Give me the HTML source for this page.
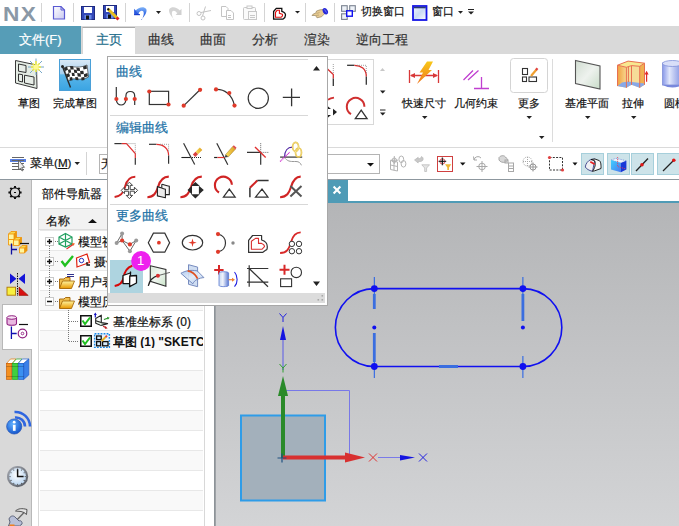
<!DOCTYPE html>
<html><head><meta charset="utf-8">
<style>
*{box-sizing:border-box}
html,body{margin:0;padding:0}
body{width:679px;height:526px;overflow:hidden;position:relative;background:#fff;font-family:"Liberation Sans",sans-serif;color:#111}
.a{position:absolute}
.t{position:absolute;white-space:nowrap;line-height:1;-webkit-text-stroke:0.2px currentColor}
svg{position:absolute;overflow:visible}
.sep{position:absolute;width:1px;background:#d4d4d4}
.dd{position:absolute;width:0;height:0;border-left:3px solid transparent;border-right:3px solid transparent;border-top:3px solid #222}
</style></head><body>

<!-- ===== Title / QAT bar ===== -->
<div class="a" style="left:0;top:0;width:679px;height:26px;background:#fff"></div>
<div class="t" style="left:3px;top:3px;font-size:21px;font-weight:bold;color:#8a98a6;letter-spacing:1.2px;transform:scaleX(1.08);transform-origin:0 0;-webkit-text-stroke:0">NX</div>
<div class="sep" style="left:41px;top:3px;height:19px"></div>
<div class="sep" style="left:73px;top:3px;height:19px"></div>
<div class="sep" style="left:125px;top:3px;height:19px"></div>
<div class="sep" style="left:189px;top:3px;height:19px"></div>
<div class="sep" style="left:264px;top:3px;height:19px"></div>
<div class="sep" style="left:305px;top:3px;height:19px"></div>
<div class="sep" style="left:334px;top:3px;height:19px"></div>


<svg class="a" style="left:0;top:0" width="679" height="26" viewBox="0 0 679 26">
 <defs>
  <linearGradient id="gDoc" x1="0" y1="0" x2="1" y2="1"><stop offset="0" stop-color="#fff"/><stop offset="1" stop-color="#c8c8f0"/></linearGradient>
  <linearGradient id="gWin" x1="0" y1="0" x2="1" y2="1"><stop offset="0" stop-color="#f4f8ff"/><stop offset="0.5" stop-color="#c9daf4"/><stop offset="1" stop-color="#ffffff"/></linearGradient>
  <linearGradient id="gUndo" x1="0" y1="0" x2="0" y2="1"><stop offset="0" stop-color="#80b4f8"/><stop offset="0.5" stop-color="#3a70e8"/><stop offset="1" stop-color="#1a48c8"/></linearGradient>
 </defs>
 <!-- new doc -->
 <path d="M53.5 6.5 H61 L64.5 10 V19 H53.5 Z" fill="url(#gDoc)" stroke="#5a5ad2" stroke-width="1.2"/>
 <path d="M61 6.5 V10 H64.5" fill="none" stroke="#5a5ad2" stroke-width="1"/>
 <!-- save -->
 <rect x="81.5" y="6.5" width="13" height="13" fill="#3348b8" stroke="#1e2a80" stroke-width="1"/>
 <rect x="84" y="7" width="8" height="6" fill="#fff"/>
 <rect x="84.5" y="15" width="7" height="4.5" fill="#6a8ae8"/>
 <rect x="86" y="15.5" width="3" height="4" fill="#111"/>
 <!-- save as -->
 <rect x="103.5" y="5.5" width="13" height="13" fill="#3348b8" stroke="#1e2a80" stroke-width="1"/>
 <rect x="106" y="6" width="8" height="6" fill="#fff"/>
 <rect x="106.5" y="14" width="7" height="4.5" fill="#6a8ae8"/>
 <rect x="108" y="14.5" width="3" height="4" fill="#111"/>
 <path d="M108 9 L117 18" stroke="#e8c020" stroke-width="3" stroke-linecap="butt"/>
 <path d="M116.5 17.5 L118.5 19.5" stroke="#e02020" stroke-width="3"/>
 <path d="M107.5 8.5 L109 10" stroke="#111" stroke-width="2"/>
 <!-- undo -->
 <path d="M135.5 10.8 C138.5 7 144 5.8 146.2 9 C147.5 11.5 145 16 141.2 19.8 L141.8 19.9 C143.8 16 144.3 12.8 143.2 11.3 C142 10 139.5 10.8 138.5 13.5 Z" fill="url(#gUndo)"/>
 <path d="M134.1 8.8 V15 H140 Z" fill="#2a5ae0"/>
 <path d="M134.1 14.2 H140 V15.2 H134.1 Z" fill="#1a3ac8"/>
 <path d="M156 11 H161 L158.5 14 Z" fill="#222"/>
 <!-- redo gray -->
 <path d="M180.1 10.8 C177.1 7 171.6 5.8 169.4 9 C168.1 11.5 170.6 16 174.4 19.8 L173.8 19.9 C171.8 16 171.3 12.8 172.4 11.3 C173.6 10 176.1 10.8 177.1 13.5 Z" fill="#d4d4d4"/>
 <path d="M181.5 8.8 V15 H175.6 Z" fill="#d0d0d0"/>
 <!-- scissors gray -->
 <g stroke="#c4c4c4" fill="none" stroke-width="1">
  <circle cx="199" cy="13.5" r="2"/><circle cx="203" cy="18" r="2"/>
  <path d="M201 12.5 L211 10.5 M202.5 16 L205.5 6.5"/>
 </g>
 <!-- copy gray -->
 <g stroke="#c4c4c4" fill="#fff" stroke-width="1">
  <path d="M221.5 6.5 H226 L228 8.5 V16.5 H221.5 Z"/>
  <path d="M226.5 10.5 H231 L233.5 13 V19.5 H226.5 Z"/>
  <path d="M228 15.5 H231 M228 17.5 H231"/>
 </g>
 <!-- paste gray -->
 <g stroke="#c8c8c8" fill="#fafafa" stroke-width="1">
  <rect x="243.5" y="7.5" width="12" height="12" rx="1"/>
  <rect x="247" y="6" width="5" height="2.5"/>
  <rect x="248.5" y="11.5" width="8" height="8"/>
  <path d="M250 15.5 H255 M250 17.5 H255"/>
 </g>
 <!-- heart/sketch style -->
 <path d="M273.6 11.5 L276.3 8.4 H281.8 V11.3 C284 12 285.5 13 285.5 15 C285.5 17 284 18.6 282.9 19.2 H273.6 Z" fill="#fff" stroke="#111" stroke-width="1.3" stroke-linejoin="miter"/>
 <path d="M275.5 12.4 L277.1 10.3 H279.4 V13.4 L282.2 14.2 C283 15 282.5 16.5 281 17.3 H275.5 Z" fill="none" stroke="#e01010" stroke-width="1.1"/>
 <path d="M295 11 H300 L297.5 13.5 Z" fill="#222"/>
 <!-- brush -->
 <path d="M312 15.5 C312.5 14 315 13.5 316 12.8 L316.5 11 L320 9.8 L323.5 9.5 L324.5 13.8 L321.5 16.8 L317 17.8 L315.5 15.5 Z" fill="#e8cc94" stroke="#8a7650" stroke-width="0.6"/>
 <path d="M316.5 13.5 L319.5 12.5 M316 15.5 L319 15" stroke="#a89060" stroke-width="0.6"/>
 <ellipse cx="325.3" cy="11.2" rx="2.4" ry="3.4" transform="rotate(-30 325.3 11.2)" fill="#2828d8"/>
 <path d="M324.5 9.5 L326.5 12.5" stroke="#8090ff" stroke-width="0.8"/>
 <!-- switch window -->
 <g fill="#eef2f8" stroke="#7a8290" stroke-width="1.1">
  <rect x="341.6" y="5.7" width="5.6" height="5.6"/><rect x="349.7" y="5.7" width="5.6" height="5.6"/>
  <rect x="341.6" y="13.8" width="5.6" height="5.6"/>
 </g>
 <rect x="346.7" y="10.8" width="5.6" height="5.4" fill="#fff" stroke="#1010f0" stroke-width="1.4"/>
 <!-- window -->
 <rect x="413" y="6" width="13.5" height="14" fill="url(#gWin)" stroke="#1414e6" stroke-width="1.8"/>
 <rect x="413.8" y="6.8" width="12" height="1.5" fill="#2a3a70"/>
 <path d="M458 11 H463 L460.5 13.8 Z" fill="#222"/>
 <path d="M468 9.5 H474" stroke="#222" stroke-width="1"/>
 <path d="M468 11.5 H474 L471 14.5 Z" fill="#222"/>
</svg>
<div class="t" style="left:361px;top:6px;font-size:11px">切换窗口</div>
<div class="t" style="left:432px;top:6px;font-size:11px">窗口</div>

<!-- ===== Menu tabs ===== -->
<div class="a" style="left:0;top:26px;width:679px;height:28px;background:#d9d9d9"></div>
<div class="a" style="left:0;top:26px;width:81px;height:28px;background:#569db7"></div>
<div class="t" style="left:19px;top:33px;font-size:13px;color:#fff">文件(F)</div>
<div class="a" style="left:82px;top:27px;width:53px;height:27px;background:#fff;border-top:1px solid #a8a8a8;border-left:1px solid #d4d4d4"></div>
<div class="t" style="left:96px;top:33px;font-size:13px;color:#1f6e8c">主页</div>
<div class="t" style="left:148px;top:33px;font-size:13px;color:#333">曲线</div>
<div class="t" style="left:200px;top:33px;font-size:13px;color:#333">曲面</div>
<div class="t" style="left:252px;top:33px;font-size:13px;color:#333">分析</div>
<div class="t" style="left:304px;top:33px;font-size:13px;color:#333">渲染</div>
<div class="t" style="left:356px;top:33px;font-size:13px;color:#333">逆向工程</div>

<!-- ===== Ribbon ===== -->
<div class="a" style="left:0;top:54px;width:679px;height:94px;background:#fff;border-bottom:1px solid #dadada"></div>
<div class="t" style="left:18px;top:98px;font-size:11px">草图</div>
<div class="t" style="left:53px;top:98px;font-size:11px">完成草图</div>
<div class="t" style="left:402px;top:98px;font-size:11px">快速尺寸</div>
<div class="t" style="left:454px;top:98px;font-size:11px">几何约束</div>
<div class="t" style="left:518px;top:98px;font-size:11px">更多</div>
<div class="t" style="left:565px;top:98px;font-size:11px">基准平面</div>
<div class="t" style="left:622px;top:98px;font-size:11px">拉伸</div>
<div class="t" style="left:664px;top:98px;font-size:11px">圆柱</div>
<div class="sep" style="left:552px;top:59px;height:83px;background:#dcdcdc"></div>


<svg class="a" style="left:0;top:0" width="679" height="148" viewBox="0 0 679 148">
 <defs>
  <linearGradient id="gFin" x1="0" y1="0" x2="0" y2="1"><stop offset="0" stop-color="#dbe9f5"/><stop offset="0.45" stop-color="#a9d0ef"/><stop offset="0.5" stop-color="#5ab6ea"/><stop offset="1" stop-color="#3aa4e2"/></linearGradient>
  <linearGradient id="gPlane" x1="0" y1="0" x2="1" y2="1"><stop offset="0" stop-color="#d0dcd0"/><stop offset="0.5" stop-color="#eef2ee"/><stop offset="1" stop-color="#c8dcc8"/></linearGradient>
  <linearGradient id="gExt" x1="0" y1="0" x2="1" y2="0"><stop offset="0" stop-color="#f0a040"/><stop offset="1" stop-color="#f8d890"/></linearGradient>
  <linearGradient id="gCyl" x1="0" y1="0" x2="1" y2="0"><stop offset="0" stop-color="#8898e8"/><stop offset="0.35" stop-color="#e0e6fb"/><stop offset="1" stop-color="#7a8ce0"/></linearGradient>
  <linearGradient id="gBolt" x1="0" y1="0" x2="0" y2="1"><stop offset="0" stop-color="#f8c818"/><stop offset="1" stop-color="#f07820"/></linearGradient>
 </defs>
 <!-- sketch icon -->
 <path d="M15.5 60.5 L36.5 65 L37 88.5 L15.5 83 Z" fill="#e4ece4" stroke="#3a3a3a" stroke-width="1"/>
 <g fill="#e8eee8" stroke="#333" stroke-width="1">
  <path d="M18.5 64 L26 65.5 V72.5 L18.5 71.2 Z"/>
  <path d="M18.5 74 L22.5 74.7 V82 L18.5 81 Z"/>
  <path d="M24.5 75.2 L34 77 V85 L24.5 83 Z"/>
 </g>
 <g stroke="#78a8c8" stroke-width="1"><path d="M36 58.5 V75 M28 67 H44 M30 61 L42 73 M42 61 L30 73"/></g>
 <g stroke="#f0ec40" stroke-width="1.6"><path d="M36 61 V72 M31 67 H41 M32.5 63.5 L39.5 70.5 M39.5 63.5 L32.5 70.5"/></g>
 <circle cx="36" cy="67" r="2.6" fill="#fffa90"/>
 <!-- finish sketch -->
 <rect x="59.5" y="59.5" width="31" height="31" fill="url(#gFin)" stroke="#4aa0d8" stroke-width="1"/>
 <path d="M62.5 66.5 L70.5 87.5" stroke="#2a2a2a" stroke-width="1.4"/>
 <circle cx="62.5" cy="66.5" r="1.5" fill="#222"/>
 <path d="M64 68 C70 64 76 70 87 65 L88.5 77 C80 82 73 76 68.5 81 Z" fill="#fff" stroke="#222" stroke-width="0.6"/>
 <g fill="#2a2a2a">
  <path d="M64 68 l3 -1.5 l1 3.2 l-3 1.4 z"/><path d="M70 66 l3.2 .3 l.6 3.3 l-3.2 -.2 z"/><path d="M76.3 67.5 l3.3 .4 l.5 3.2 l-3.2 -.3 z"/><path d="M83 66.5 l3.5 -1 l.4 3.2 l-3.4 .9 z"/>
  <path d="M65 71 l3 -1.3 l1 3.1 l-3 1.4 z" fill="none"/>
  <path d="M68 69.7 l2.6 -.4 l.5 3.2 l-2.6 .6 z"/><path d="M73.8 69.6 l2.9 .4 l.5 3.1 l-3 -.3 z"/><path d="M80.1 71.1 l3.3 -.4 l.4 3.2 l-3.3 .4 z"/>
  <path d="M66 74.5 l3 -1.4 l1.1 3.2 l-3 1.3 z"/><path d="M71.6 72.7 l2.7 .3 l.5 3.1 l-2.7 -.1 z"/><path d="M77.2 73.1 l3.3 .5 l.5 3.2 l-3.3 -.4 z"/><path d="M83.8 74.3 l3.6 -1.3 l.5 3.2 l-3.6 1.2 z"/>
  <path d="M69.5 77.5 l2.6 -.4 l.5 3.1 l-2.6 .6 z"/><path d="M75.2 77 l2.8 .3 l.4 3 l-2.8 -.2 z"/><path d="M81.2 77.5 l3 -.5 l.4 3 l-3 .6 z"/>
 </g>
 <!-- quick dimension -->
 <g stroke="#d83838" stroke-width="1.3" fill="none"><path d="M409.5 70 V83 M438.5 70 V83 M411 75.5 H437"/></g>
 <path d="M410 75.5 L415 73 V78 Z M438 75.5 L433 73 V78 Z" fill="#d83838"/>
 <path d="M427 61.5 H433 L428.5 70 H432 L417 84 L423 72.5 H419.5 Z" fill="url(#gBolt)"/>
 <!-- geometric constraints -->
 <g stroke="#c040d0" stroke-width="1.3"><path d="M463.5 80 L473 70.5 M468 80 L478.5 70.5 M481.5 77 V88 M474 88.5 H489"/></g>
 <!-- more box -->
 <rect x="510.5" y="58.5" width="37" height="34" rx="3" fill="#fff" stroke="#d4d4d4" stroke-width="1"/>
 <g stroke="#333" stroke-width="1.1" fill="#fff">
  <rect x="522.5" y="68.5" width="5" height="6"/><rect x="522.5" y="77" width="4" height="4.5"/><rect x="529" y="77" width="7.5" height="4.5"/>
 </g>
 <path d="M531 76 L536.5 69.5" stroke="#f0a030" stroke-width="2.2"/>
 <path d="M536 70 L537.5 68.2" stroke="#e04040" stroke-width="2.2"/>
 <!-- datum plane -->
 <path d="M575.5 60.5 L600 66 V89 L575.5 83.5 Z" fill="url(#gPlane)" stroke="#555" stroke-width="1.1"/>
 <!-- extrude -->
 <path d="M617.5 65.2 L626.4 67.3 V87.8 L617.5 86.1 Z" fill="url(#gExt)"/>
 <path d="M626.4 67.3 L631.5 65.6 L639.7 66.3 V87.8 L631.5 84.8 L626.4 87.8 Z" fill="#f6dc98"/>
 <path d="M639.7 66.3 L644.5 63.2 V84.8 L639.7 87.8 Z" fill="#f0b050"/>
 <path d="M617.5 65.2 L628.1 61.1 L644.5 63.2 L639.7 66.3 L631.5 65.6 L626.4 67.3 Z" fill="#f8e890"/>
 <path d="M617.5 86.1 L622 82.5 L628 81.5 L644.5 83.5 V84.8 L639.7 87.8 L631.5 84.8 L626.4 87.8 Z" fill="#88a8e8"/>
 <g stroke="#e87050" stroke-width="1" fill="none">
  <path d="M617.5 65.2 L628.1 61.1 L644.5 63.2 L639.7 66.3 L631.5 65.6 L626.4 67.3 Z"/>
  <path d="M617.5 65.2 V86.1 M626.4 67.3 V87.8 M628.4 67 V82 M631.5 65.6 V84.8 M639.7 66.3 V87.8 M644.5 63.2 V84.8"/>
 </g>
 <path d="M646.6 73 V81.7" stroke="#e02828" stroke-width="1.2"/><path d="M644.6 74.5 L646.6 70.7 L648.6 74.5 Z" fill="#e02828"/>
 <!-- cylinder -->
 <rect x="662.5" y="63" width="20" height="22" fill="url(#gCyl)" stroke="#8090d8" stroke-width="0.8"/>
 <ellipse cx="672.5" cy="63.5" rx="10" ry="3" fill="#d8def8" stroke="#8090d8" stroke-width="0.8"/>
 <path d="M662.5 85 Q672.5 90 682.5 85" fill="#7888dc"/>
 <!-- ribbon gallery (behind popup) -->
 <rect x="300.5" y="59.5" width="73" height="65" fill="#fff" stroke="#d8d8d8" stroke-width="1"/>
 <g fill="none" stroke-width="1.3">
  <path d="M347.1 65.3 H354.4" stroke="#333"/><path d="M354.4 65.3 C361 65.3 366.3 69 366.3 76.5" stroke="#d83030"/><path d="M366.3 76.5 V84.8" stroke="#333"/>
  <path d="M357 65.3 H366.3 V73" stroke="#888" stroke-width="0.8" stroke-dasharray="1 1"/>
  <path d="M327 68.5 L333.3 74.5 V78.5" stroke="#d83030"/><path d="M333.3 78.5 V86" stroke="#333"/>
  <path d="M333.3 64 V74" stroke="#888" stroke-width="0.8" stroke-dasharray="1 1"/>
  <path d="M351 114.2 A8.8 8.8 0 1 1 364.4 106.7" stroke="#d03030" stroke-width="2"/>
  <path d="M328 99.7 C330 98.5 332 98 334 97.7" stroke="#d03030" stroke-width="1.8"/>
 </g>
 <path d="M355.3 118.7 L361.2 110.1 L367.1 118.7 Z" fill="none" stroke="#333" stroke-width="1.3"/>
 <path d="M333 108.7 L337 112 L333 115.5 Z" fill="#222"/>
 <path d="M327.5 106 L331 109 H327.5 Z M327.5 118 L331 115 H327.5 Z" fill="#222"/>
 <path d="M380 71 L382.5 68 L385 71 Z" fill="#c8c8c8"/>
 <path d="M380 90.5 H385.5 L382.7 93.5 Z" fill="#222"/>
 <path d="M380 110 H385.5" stroke="#222" stroke-width="1"/>
 <path d="M380 112.5 H385.5 L382.7 115.5 Z" fill="#222"/>
 <!-- dropdown arrows -->
 <path d="M422 116 H427.5 L424.7 119 Z M526.5 116 H532 L529.2 119 Z M585 116 H590.5 L587.7 119 Z M631 116 H636.5 L633.7 119 Z M539 136 H544.5 L541.7 139 Z" fill="#222"/>
</svg>

<!-- ===== Secondary toolbar ===== -->
<div class="a" style="left:0;top:148px;width:679px;height:32px;background:#fff;border-bottom:1px solid #8d979e"></div>
<div class="t" style="left:30px;top:157px;font-size:11.6px">菜单(<u>M</u>)</div>
<div class="sep" style="left:86px;top:152px;height:23px"></div>
<div class="a" style="left:99px;top:154px;width:281px;height:20px;border:1px solid #b4b4b4;background:#fff"></div>
<div class="t" style="left:101px;top:158px;font-size:12px">无</div>


<svg class="a" style="left:0;top:148px" width="679" height="32" viewBox="0 148 679 32">
 <defs>
  <linearGradient id="gCube" x1="0" y1="0" x2="1" y2="1"><stop offset="0" stop-color="#40d0ff"/><stop offset="1" stop-color="#4a78f0"/></linearGradient>
 </defs>
 <!-- menu icon -->
 <rect x="10" y="159" width="16" height="3" fill="#5a80e0"/>
 <g stroke="#666" stroke-width="1"><path d="M12 157.5 H24 M12 160.5 H24 M12 163.5 H24 M12 166.5 H24 M12 169.5 H24"/></g>
 <path d="M18.5 160 V170 L20.5 168 L22 171 L23 170.5 L21.8 167.5 L24.5 167.3 Z" fill="#eee" stroke="#555" stroke-width="0.8"/>
 <path d="M74.5 162 H80 L77.2 165 Z" fill="#222"/>
 <path d="M367 163 H374 L370.5 166.5 Z" fill="#111"/>
 <!-- gray icons -->
 <g stroke="#b4b4b4" fill="none" stroke-width="1">
  <path d="M390.5 160.5 L397.5 162 V171 L390.5 169.5 Z M390.5 165 L397.5 166.5 M394 161.2 V170.3"/>
  <path d="M394.3 156 V164 M390.5 160.2 H398"/>
  <circle cx="394.3" cy="160.2" r="2.2"/>
  <ellipse cx="401.3" cy="159.3" rx="2.4" ry="3.3"/><ellipse cx="403.5" cy="163.8" rx="2.4" ry="3.3"/>
 </g>
 <path d="M414.5 160 L418.2 157.3 V158.8 C420 158.8 421.5 157.5 421.5 156.5 C423.8 157.5 424 161 420.5 161.5 L418.2 161.5 V163 Z" fill="#c8c8c8" stroke="#b0b0b0" stroke-width="0.6"/>
 <path d="M421.8 164.8 H429.5 L426.6 168 V171.5 H424.7 V168 Z" fill="#e4e4e4" stroke="#bdbdbd" stroke-width="0.8"/>
 <rect x="437.5" y="156.5" width="15" height="15" fill="#fff" stroke="#d04040" stroke-width="1"/>
 <circle cx="442.4" cy="161.4" r="2.6" fill="none" stroke="#e04048" stroke-width="0.9"/>
 <path d="M442.4 157.6 V165.2 M438.6 161.4 H446.2" stroke="#333" stroke-width="1.3"/>
 <circle cx="442.4" cy="161.4" r="1" fill="#111"/>
 <path d="M445 164.2 H451.3 L449 167.5 V170 H447.3 V167.5 Z" fill="#f0b838"/>
 <path d="M460 162.5 H465.5 L462.7 165.5 Z" fill="#111"/>
 <g stroke="#a8a8a8" fill="none" stroke-width="1">
  <path d="M474 160 A4 4 0 0 1 481 158 M474 160 L473.5 156.5 M474 160 L477 160"/>
  <circle cx="482" cy="166.5" r="3.3"/><path d="M482 161 V172 M476.5 166.5 H487.5"/>
  <path d="M499 157.5 C501 155 505 155 506 158 C508 158 508 162 506 162 C503 163 500 162 499 160 Z" fill="#d8d8d8"/>
  <rect x="505" y="160" width="3" height="3"/><rect x="508.5" y="163" width="5" height="8.5"/><path d="M508.5 166 H513.5 M508.5 168.5 H513.5"/>
 </g>
 <g stroke="#a8a8a8" fill="none" stroke-width="1" stroke-dasharray="1 1">
  <circle cx="527.5" cy="161.5" r="4.5"/><path d="M527.5 157 V166 M523 161.5 H532"/>
 </g>
 <circle cx="533" cy="167" r="3" fill="none" stroke="#999" stroke-width="1"/>
 <path d="M533 162.5 V171.5 M528.5 167 H537.5" stroke="#999" stroke-width="1"/>
 <rect x="549.5" y="157.5" width="13" height="12.5" fill="none" stroke="#333" stroke-width="1" stroke-dasharray="2 1.3"/>
 <circle cx="549.5" cy="157.5" r="1.6" fill="#e04040"/><circle cx="562.5" cy="170" r="1.6" fill="#e04040"/>
 <path d="M572.5 162.5 H577.5 L575 165.5 Z" fill="#111"/>
 <!-- highlighted buttons -->
 <g fill="#cde3e9" stroke="#a6cfdb" stroke-width="1">
  <rect x="581.5" y="153.5" width="22" height="21"/><rect x="607.5" y="153.5" width="22" height="21"/>
  <rect x="631.5" y="153.5" width="22" height="21"/><rect x="657.5" y="153.5" width="30" height="21"/>
 </g>
 <path d="M585.3 167 C585.5 164 588 160.5 591 159.5 L595 159 L592.5 171.3 C589 170.5 586.5 169 585.3 167 Z" fill="#f0f0f4" stroke="#3a4088" stroke-width="0.9"/>
 <path d="M591 159.5 L595 159 L599 160.5 C600.5 161 601.2 163.5 601 168.5 L594.7 170.8 L592.5 171.3 C595 168 596 164 594.7 160.8 Z" fill="#f8f8f8" stroke="#111" stroke-width="0.9"/>
 <path d="M590.3 161.8 L594.7 164.3" stroke="#e82020" stroke-width="1.6"/>
 <path d="M611 160.1 L616 158.3 L626.4 160.8 L620.9 163 Z" fill="#eef4fa" stroke="#4a70d0" stroke-width="0.6" stroke-dasharray="1 0.8"/>
 <path d="M611 160.1 L620.9 163 V172.3 L611 169.5 Z" fill="url(#gCube)"/>
 <path d="M620.9 163 L626.4 160.8 V169.5 L620.9 172.3 Z" fill="#1838d8"/>
 <path d="M617.6 157 V166.5 L626 169" fill="none" stroke="#e04060" stroke-width="0.8" stroke-dasharray="1.2 0.8"/>
 <path d="M636 171 L648 158.5" stroke="#222" stroke-width="1.3"/><circle cx="642" cy="164.8" r="1.8" fill="#e01818"/>
 <path d="M663 171 L673.5 160.5" stroke="#222" stroke-width="1.3"/><circle cx="673.8" cy="160.3" r="1.8" fill="#e01818"/>
</svg>

<!-- ===== Left resource bar ===== -->
<div class="a" style="left:0;top:180px;width:32px;height:346px;background:#d9d9d9;border-right:1px solid #b8b8b8"></div>
<div class="a" style="left:2px;top:304px;width:30px;height:46px;background:#fff;border:1px solid #b8b8b8;border-right:none"></div>

<!-- ===== Navigator pane ===== -->
<div class="a" style="left:32px;top:180px;width:182px;height:346px;background:#fff"></div>
<div class="t" style="left:42px;top:188px;font-size:12px">部件导航器</div>
<div class="a" style="left:38px;top:208px;width:167px;height:318px;border:1px solid #d8d8d8;border-bottom:none;background:#fff"></div>
<div class="a" style="left:39px;top:209px;width:165px;height:21px;background:#f2f2f2;border-bottom:1px solid #dedede"></div>
<div class="t" style="left:46px;top:215px;font-size:12px">名称</div>
<div class="a" style="left:40px;top:230px;width:163px;height:20px;background:#fff;border-top:1px solid #e8e8e8"></div>
<div class="a" style="left:40px;top:250px;width:163px;height:20px;background:#f9f9f9;border-top:1px solid #e8e8e8"></div>
<div class="a" style="left:40px;top:270px;width:163px;height:20px;background:#fff;border-top:1px solid #e8e8e8"></div>
<div class="a" style="left:40px;top:290px;width:163px;height:20px;background:#f9f9f9;border-top:1px solid #e8e8e8"></div>
<div class="a" style="left:40px;top:310px;width:163px;height:20px;background:#fff;border-top:1px solid #e8e8e8"></div>
<div class="a" style="left:40px;top:330px;width:163px;height:20px;background:#f9f9f9;border-top:1px solid #e8e8e8"></div>
<div class="a" style="left:40px;top:350px;width:163px;height:20px;background:#fff;border-top:1px solid #e8e8e8"></div>
<div class="a" style="left:40px;top:370px;width:163px;height:20px;background:#f9f9f9;border-top:1px solid #e8e8e8"></div>
<div class="a" style="left:40px;top:390px;width:163px;height:20px;background:#fff;border-top:1px solid #e8e8e8"></div>
<div class="a" style="left:40px;top:410px;width:163px;height:20px;background:#f9f9f9;border-top:1px solid #e8e8e8"></div>
<div class="a" style="left:40px;top:430px;width:163px;height:20px;background:#fff;border-top:1px solid #e8e8e8"></div>
<div class="a" style="left:40px;top:450px;width:163px;height:20px;background:#f9f9f9;border-top:1px solid #e8e8e8"></div>
<div class="a" style="left:40px;top:470px;width:163px;height:20px;background:#fff;border-top:1px solid #e8e8e8"></div>
<div class="a" style="left:40px;top:490px;width:163px;height:20px;background:#f9f9f9;border-top:1px solid #e8e8e8"></div>
<div class="a" style="left:40px;top:510px;width:163px;height:20px;background:#fff;border-top:1px solid #e8e8e8"></div>

<div class="t" style="left:78px;top:236px;font-size:12px;width:29px;overflow:hidden">模型视图</div>
<div class="t" style="left:94px;top:256px;font-size:12px;width:13px;overflow:hidden">摄像机</div>
<div class="t" style="left:78px;top:276px;font-size:12px;width:29px;overflow:hidden">用户表达式</div>
<div class="t" style="left:78px;top:296px;font-size:12px;width:29px;overflow:hidden">模型历史记录</div>
<div class="t" style="left:113px;top:316px;font-size:12px">基准坐标系 (0)</div>
<div class="t" style="left:113px;top:336px;font-size:12px;font-weight:bold;width:90px;overflow:hidden;-webkit-text-stroke:0">草图 (1) "SKETCH_000"</div>
<svg class="a" style="left:0;top:180px" width="215" height="346" viewBox="0 180 215 346">
 <defs>
  <linearGradient id="gFold" x1="0" y1="0" x2="0" y2="1"><stop offset="0" stop-color="#fff4a0"/><stop offset="1" stop-color="#e89800"/></linearGradient>
  <radialGradient id="gInfo" cx="0.4" cy="0.35" r="0.7"><stop offset="0" stop-color="#60b0ff"/><stop offset="1" stop-color="#1050c8"/></radialGradient>
 </defs>
 <!-- gear -->
 <g transform="translate(15,192.5)">
  <circle r="4.7" fill="none" stroke="#111" stroke-width="1.3"/>
  <g fill="#111"><path d="M-1 -6.6 h2 v2.2 h-2z M-1 4.4 h2 v2.2 h-2z M-6.6 -1 v2 h2.2 v-2z M4.4 -1 v2 h2.2 v-2z"/>
  <path d="M-1 -6.6 h2 v2.2 h-2z M-1 4.4 h2 v2.2 h-2z M-6.6 -1 v2 h2.2 v-2z M4.4 -1 v2 h2.2 v-2z" transform="rotate(45)"/></g>
  <rect x="-1" y="-0.5" width="2" height="1" fill="#111"/>
 </g>
 <!-- assembly nav icon -->
 <g><path d="M8.5 239.5 L11.0 237 H16.5 L14.0 239.5 Z" fill="#f8d850"/><path d="M14.0 239.5 L16.5 237 V242.5 L14.0 245.0 Z" fill="#e89810"/><rect x="8.5" y="239.5" width="5.5" height="5.5" fill="#fff6a0"/><path d="M8.5 239.5 L11.0 237 H16.5 V242.5 L14.0 245.0 H8.5 Z M8.5 239.5 H14.0 V245.0 M14.0 239.5 L16.5 237" fill="none" stroke="#f09000" stroke-width="0.8"/><path d="M8.5 234.0 L11.0 231.5 H16.5 L14.0 234.0 Z" fill="#f8d850"/><path d="M14.0 234.0 L16.5 231.5 V237.0 L14.0 239.5 Z" fill="#e89810"/><rect x="8.5" y="234.0" width="5.5" height="5.5" fill="#fff6a0"/><path d="M8.5 234.0 L11.0 231.5 H16.5 V237.0 L14.0 239.5 H8.5 Z M8.5 234.0 H14.0 V239.5 M14.0 234.0 L16.5 231.5" fill="none" stroke="#f09000" stroke-width="0.8"/><path d="M13.5 240.0 L16.0 237.5 H21.5 L19.0 240.0 Z" fill="#f8d850"/><path d="M19.0 240.0 L21.5 237.5 V243.0 L19.0 245.5 Z" fill="#e89810"/><rect x="13.5" y="240.0" width="5.5" height="5.5" fill="#fff6a0"/><path d="M13.5 240.0 L16.0 237.5 H21.5 V243.0 L19.0 245.5 H13.5 Z M13.5 240.0 H19.0 V245.5 M19.0 240.0 L21.5 237.5" fill="none" stroke="#f09000" stroke-width="0.8"/><path d="M19.5 248.0 L22.0 245.5 H27.0 L24.5 248.0 Z" fill="#f8d850"/><path d="M24.5 248.0 L27.0 245.5 V250.5 L24.5 253.0 Z" fill="#e89810"/><rect x="19.5" y="248.0" width="5" height="5" fill="#fff6a0"/><path d="M19.5 248.0 L22.0 245.5 H27.0 V250.5 L24.5 253.0 H19.5 Z M19.5 248.0 H24.5 V253.0 M24.5 248.0 L27.0 245.5" fill="none" stroke="#f09000" stroke-width="0.8"/></g>
 <path d="M11.5 243.5 V254.5 M11.5 249.5 H17" stroke="#1010a0" stroke-width="1.3"/>
 <path d="M20 243.5 H29" stroke="#111" stroke-width="1.2"/>
 <!-- constraint nav icon -->
 <path d="M10 273.5 L16.5 278.8 L10 284 Z M25 273.5 L18.5 278.8 L25 284 Z" fill="#1414d8"/>
 <path d="M17.5 273 V296" stroke="#111" stroke-width="1" stroke-dasharray="1.5 1"/>
 <rect x="7" y="287.2" width="8.6" height="8" fill="#f8f040" stroke="#b07800" stroke-width="0.9"/>
 <path d="M19 287 L28.2 295.4 H19 Z" fill="#d81010" stroke="#901000" stroke-width="0.6"/>
 <!-- part nav icon -->
 <path d="M7 317.5 V323.5 C7 325.8 16.5 325.8 16.5 323.5 V317.5" fill="#e8b8e0" stroke="#902080" stroke-width="1.1"/>
 <ellipse cx="11.75" cy="317.5" rx="4.75" ry="1.8" fill="#f8e0f4" stroke="#902080" stroke-width="1"/>
 <path d="M19 324.5 H28" stroke="#111" stroke-width="1.2"/>
 <path d="M11.4 326.5 V339 M11.4 333.5 H16.7" stroke="#1010b0" stroke-width="1.3"/>
 <circle cx="22.5" cy="333.5" r="4.3" fill="none" stroke="#902080" stroke-width="1.2"/><circle cx="22.5" cy="333.5" r="1.3" fill="none" stroke="#902080" stroke-width="0.9"/>
 <!-- books -->
 <path d="M6.5 363.5 L10.5 359 H28.8 L23.5 363.5 Z" fill="#fff"/>
 <path d="M6.5 363.5 L10.5 359 H16 L12 363.5 Z" fill="#fff" stroke="#e07800" stroke-width="0.7"/>
 <path d="M12.3 363.5 L16.3 359 H22 L18 363.5 Z" fill="#fff" stroke="#20a020" stroke-width="0.7"/>
 <path d="M18.2 363.5 L22.2 359 H28.8 L23.8 363.5 Z" fill="#fff" stroke="#2060d0" stroke-width="0.7"/>
 <rect x="6.4" y="363.5" width="5.3" height="16" fill="#f49020" stroke="#c85800" stroke-width="0.6"/>
 <rect x="12.5" y="363.5" width="5.3" height="16" fill="#40d040" stroke="#18a018" stroke-width="0.6"/>
 <rect x="18.4" y="363.5" width="5.3" height="16" fill="#3a90f0" stroke="#1a58c8" stroke-width="0.6"/>
 <path d="M23.7 363.5 L28.8 359 V375 L23.7 379.5 Z" fill="#3a80e8" stroke="#1a58c8" stroke-width="0.6"/>
 <path d="M6.4 366.5 H23.7 M6.4 376.5 H23.7" stroke="#000" stroke-opacity="0.25" stroke-width="0.8"/>
 <!-- info -->
 <circle cx="14.2" cy="426.5" r="7.6" fill="url(#gInfo)" stroke="#1a4ab0" stroke-width="0.6"/>
 <rect x="12.9" y="424.8" width="2.7" height="6" fill="#fff"/><circle cx="14.2" cy="422.2" r="1.4" fill="#fff"/>
 <path d="M15 417.5 A9 9 0 0 1 25 426.5 M14.5 412 A14.5 14.5 0 0 1 30 426.5" fill="none" stroke="#2f66e0" stroke-width="2.6"/>
 <!-- clock -->
 <defs><radialGradient id="gClock" cx="0.45" cy="0.4" r="0.65"><stop offset="0" stop-color="#ffffff"/><stop offset="1" stop-color="#b8d4f0"/></radialGradient>
 <linearGradient id="gRim" x1="0" y1="0" x2="1" y2="1"><stop offset="0" stop-color="#a8acb4"/><stop offset="1" stop-color="#50545c"/></linearGradient></defs>
 <circle cx="17.6" cy="476.6" r="10.6" fill="url(#gRim)"/>
 <circle cx="17.6" cy="476.6" r="8.5" fill="url(#gClock)"/>
 <circle cx="17.60" cy="469.00" r="0.55" fill="#333"/><circle cx="21.40" cy="470.02" r="0.55" fill="#333"/><circle cx="24.18" cy="472.80" r="0.55" fill="#333"/><circle cx="25.20" cy="476.60" r="0.55" fill="#333"/><circle cx="24.18" cy="480.40" r="0.55" fill="#333"/><circle cx="21.40" cy="483.18" r="0.55" fill="#333"/><circle cx="17.60" cy="484.20" r="0.55" fill="#333"/><circle cx="13.80" cy="483.18" r="0.55" fill="#333"/><circle cx="11.02" cy="480.40" r="0.55" fill="#333"/><circle cx="10.00" cy="476.60" r="0.55" fill="#333"/><circle cx="11.02" cy="472.80" r="0.55" fill="#333"/><circle cx="13.80" cy="470.02" r="0.55" fill="#333"/>
 <path d="M17.6 469.2 V476.6 H23.6" stroke="#111" stroke-width="1.5" fill="none"/>
 <!-- tool -->
 <path d="M14 523 L25 511.5" stroke="#666" stroke-width="1.3"/>
 <path d="M15.5 511 C18 508.5 22 508 27 509.5 L26.5 514.5 L24 512.5 L21 511.5 Z" fill="#e4e4e4" stroke="#444" stroke-width="0.9"/>
 <path d="M9 519 C10 516 13 515 15 517 L19 521 C21 520 22.5 522 22 524 L19.5 526 H8.5 L10 522 Z" fill="#b8c0d8" stroke="#505870" stroke-width="0.9"/>
 <rect x="9.5" y="524.5" width="5" height="1.5" fill="#f08020"/>
 <!-- tree -->
 <g fill="#fff" stroke="#c8c8c8" stroke-width="1">
  <rect x="45.5" y="237.5" width="8" height="8"/><rect x="45.5" y="257.5" width="8" height="8"/>
  <rect x="45.5" y="277.5" width="8" height="8"/><rect x="45.5" y="297.5" width="8" height="8"/>
 </g>
 <path d="M47 241.5 H52 M49.5 239 V244 M47 261.5 H52 M49.5 259 V264 M47 281.5 H52 M49.5 279 V284 M47 301.5 H52" stroke="#111" stroke-width="1.4"/>
 <g stroke="#777" stroke-width="1" stroke-dasharray="1 1">
  <path d="M49.5 246 V257 M49.5 266 V277 M49.5 286 V297 M55 241.5 H58 M55 261.5 H58 M55 281.5 H58 M55 301.5 H58"/>
  <path d="M68.5 310 V342 M69 321.5 H78 M69 341.5 H78"/>
 </g>
 <!-- model views -->
 <g stroke="#22a060" stroke-width="1.2" fill="none">
  <path d="M65.5 233.5 L72 237 V244 L65.5 247 L59 244 V237 Z M59 237 L65.5 240.5 L72 237 M65.5 240.5 V247 M59 244 L65.5 240.5 L72 244 M65.5 233.5 V240.5"/>
 </g>
 <path d="M66.5 249 L73 244.5" stroke="#e03030" stroke-width="1.3"/><path d="M72 243 L75 243.5 L73 246 Z" fill="#f06020"/>
 <!-- camera row -->
 <path d="M61.5 261 L65 265.5 L73 256" stroke="#20c020" stroke-width="2.4" fill="none"/>
 <path d="M76.5 258 L87 254 L89.5 262.5 L77 267 Z" fill="#fff" stroke="#e02010" stroke-width="1.2"/>
 <circle cx="81.5" cy="260.5" r="2.2" fill="none" stroke="#2030c0" stroke-width="1"/>
 <path d="M87 262 V265 H90" stroke="#111" stroke-width="1.3" fill="none"/>
 <!-- folders -->
 <path d="M59.5 279 H64 L65.5 277.5 H70 V288 H59.5 Z" fill="#f0c050" stroke="#a06000" stroke-width="0.9"/>
 <path d="M59.5 288.5 L62.5 281 H74.5 L71.5 288.5 Z" fill="url(#gFold)" stroke="#a06000" stroke-width="0.8"/>
 <path d="M67 274.5 H74 M67 276.5 H74" stroke="#1a1a80" stroke-width="0.9"/>
 <path d="M59.5 299 H64 L65.5 297.5 H70 V308 H59.5 Z" fill="#f0c050" stroke="#a06000" stroke-width="0.9"/>
 <path d="M59.5 308.5 L62.5 301 H74.5 L71.5 308.5 Z" fill="url(#gFold)" stroke="#a06000" stroke-width="0.8"/>
 <!-- checkboxes -->
 <rect x="80.75" y="315.75" width="10.5" height="10.5" fill="#fff" stroke="#111" stroke-width="1.5"/>
 <path d="M82.5 320.5 L85 324 L90 317.5" stroke="#20c020" stroke-width="2" fill="none"/>
 <rect x="80.75" y="335.75" width="10.5" height="10.5" fill="#fff" stroke="#111" stroke-width="1.5"/>
 <path d="M82.5 340.5 L85 344 L90 337.5" stroke="#20c020" stroke-width="2" fill="none"/>
 <!-- csys icon -->
 <path d="M95.7 318.5 L101.3 315.1 V325.4 L95.7 323.2 Z" fill="#f4f8f4" stroke="#222" stroke-width="1.1" stroke-linejoin="round"/>
 <path d="M95.7 320.8 L101.3 322.6 L107.6 323.6 L101.3 325.4" fill="#e0f0e0" stroke="#222" stroke-width="1.1" stroke-linejoin="round"/>
 <path d="M95.3 317.5 V314.5" stroke="#1010c0" stroke-width="1.2"/><path d="M93.8 315 L95.3 312.5 L96.8 315 Z" fill="#1010c0"/>
 <path d="M103.9 319.5 L107.8 318.3" stroke="#209020" stroke-width="1.2"/><path d="M107 316.8 L109.6 317.7 L107.8 319.8 Z" fill="#209020"/>
 <path d="M103.1 326.2 L106 327.6" stroke="#c02020" stroke-width="1.2"/><path d="M105.5 326 L107.6 328.5 L104.8 328.8 Z" fill="#c02020"/>
 <!-- sketch icon -->
 <rect x="94.6" y="333.8" width="14.8" height="13.6" fill="#e4f0fc" stroke="#1a8ae8" stroke-width="1.4" stroke-dasharray="1.8 1.2"/>
 <g fill="#d8ecfc" stroke="#111" stroke-width="1.3"><rect x="96.6" y="336" width="4.6" height="3.6"/><rect x="96.6" y="341.6" width="4" height="4.2"/><rect x="102.6" y="341.6" width="5.4" height="4.2"/></g>
 <path d="M101.6 341 L106 336.6" stroke="#e8b020" stroke-width="2"/><path d="M105.6 337 L107 335.6" stroke="#e04040" stroke-width="2"/>
 <!-- header sort arrow -->
 <path d="M88 223 L92.5 219 L97 223 Z" fill="#111"/>
</svg>
<div class="a" style="left:214px;top:180px;width:1px;height:346px;background:#8d9398"></div>

<!-- ===== Graphics ===== -->
<div class="a" style="left:215px;top:180px;width:464px;height:23px;background:#fff"></div>
<div class="a" style="left:328px;top:180px;width:20px;height:23px;background:#4f9bb6"></div>
<div class="a" style="left:215px;top:201px;width:464px;height:2px;background:#4f9bb6"></div>
<div class="a" style="left:215px;top:203px;width:464px;height:323px;background:linear-gradient(#b4b5b7,#d3d4d6)"></div>
<div class="a" style="left:215px;top:203px;width:1px;height:323px;background:#9ea2a6"></div>


<svg class="a" style="left:328px;top:180px" width="20" height="21" viewBox="328 180 20 21"><path d="M333.6 186.6 L340.4 193.4 M340.4 186.6 L333.6 193.4" stroke="#fff" stroke-width="2.1"/></svg>
<svg class="a" style="left:215px;top:203px" width="464" height="323" viewBox="215 203 464 323">
 <!-- blue square -->
 <rect x="241" y="415.5" width="84" height="85" fill="#a3b0bb" stroke="#2e9ce8" stroke-width="2"/>
 <!-- purple rect lines -->
 <path d="M285 390.5 H349.5 V457.5" fill="none" stroke="#7878e8" stroke-width="1"/>
 <!-- blue Y axis -->
 <path d="M283 338 V370" stroke="#5a5ae8" stroke-width="1"/>
 <path d="M280 340 L283 326 L286 340 Z" fill="#1414e0"/>
 <path d="M279.5 313.5 L283 317.5 L286.5 313.5 M283 317.5 V322" fill="none" stroke="#2020e0" stroke-width="1"/>
 <!-- green Y label -->
 <path d="M279.5 364 L283 368 L286.5 364 M283 368 V372.5" fill="none" stroke="#30a030" stroke-width="1"/>
 <!-- blue X axis -->
 <path d="M378 457.5 H401" stroke="#7a7ae8" stroke-width="1"/>
 <path d="M400 455 L415 457.5 L400 460.5 Z" fill="#1414e0"/>
 <path d="M419 453.5 L427 461.5 M427 453.5 L419 461.5" stroke="#2020e0" stroke-width="1"/>
 <!-- red X label -->
 <path d="M369 453.5 L377 461.5 M377 453.5 L369 461.5" stroke="#e03030" stroke-width="1"/>
 <!-- green arrow -->
 <rect x="281" y="392" width="4" height="66" fill="#2a8a2a"/>
 <path d="M278 396 L283 376 L288 396 Z" fill="#2a8a2a"/>
 <!-- red arrow -->
 <rect x="283" y="455.5" width="64" height="4" fill="#d83030"/>
 <path d="M345 452.5 L365 457.5 L345 462.5 Z" fill="#d83030"/>
 <!-- origin -->
 <path d="M277.5 458 H286.5 M282 453.5 V462.5" stroke="#205080" stroke-width="1.2"/>
 <!-- sketch -->
 <g fill="none" stroke="#1010f0" stroke-width="1.6">
  <path d="M374.3 288.6 H522.9 A38.9 38.9 0 0 1 522.9 366.5 H374.3 A38.9 38.9 0 0 1 374.3 288.6 Z"/>
 </g>
 <g stroke="#1e5ce8" stroke-width="1">
  <path d="M374.3 277 V298 M374.3 356 V378 M522.9 277 V298 M522.9 356 V378"/>
 </g>
 <g stroke="#3a6ee0" stroke-width="2.8">
  <path d="M374.3 294 V309 M374.3 333 V362 M522.9 294 V321 M439 366.5 H458"/>
 </g>
 <g fill="#1010f0">
  <circle cx="374.3" cy="288.6" r="3.4"/><circle cx="374.3" cy="366.5" r="3.4"/>
  <circle cx="522.9" cy="288.6" r="3.4"/><circle cx="522.9" cy="366.5" r="3.4"/>
  <circle cx="374.3" cy="327.5" r="2"/><circle cx="522.9" cy="327.5" r="2"/>
 </g>
</svg>

<!-- ===== Popup ===== -->
<div class="a" style="left:107px;top:56px;width:221px;height:250px;background:#fff;border:1px solid #a8a8a8"></div>
<div class="a" style="left:110px;top:59px;width:198px;height:1px;background:#d8d8d8"></div>
<div class="a" style="left:110px;top:115px;width:198px;height:1px;background:#d8d8d8"></div>
<div class="a" style="left:110px;top:204px;width:198px;height:1px;background:#d8d8d8"></div>
<div class="a" style="left:108px;top:293px;width:217px;height:10px;background:#dcdcdc"></div>
<div class="a" style="left:110px;top:260px;width:33px;height:33px;background:#aed4e0"></div>
<div class="t" style="left:116px;top:65px;font-size:13px;color:#1c72a6">曲线</div>
<div class="t" style="left:116px;top:121px;font-size:13px;color:#1c72a6">编辑曲线</div>
<div class="t" style="left:116px;top:209px;font-size:13px;color:#1c72a6">更多曲线</div>
<svg class="a" style="left:107px;top:56px" width="221" height="249" viewBox="107 56 221 249">
 <defs>
  <linearGradient id="gCylS" x1="0" y1="0" x2="1" y2="0"><stop offset="0" stop-color="#c8d8f0"/><stop offset="0.4" stop-color="#f0f4fc"/><stop offset="1" stop-color="#5a78d0"/></linearGradient>
  <linearGradient id="gPen" x1="0" y1="0" x2="1" y2="0"><stop offset="0" stop-color="#f8e060"/><stop offset="1" stop-color="#e0a020"/></linearGradient>
 </defs>
 <g fill="#222"><path d="M313 70.5 L316.5 66 L320 70.5 Z M313 281.5 H320 L316.5 286 Z"/></g>
 <g fill="#a8a8a8"><rect x="321.5" y="295" width="1.6" height="1.6"/><rect x="317.5" y="299" width="1.6" height="1.6"/><rect x="321.5" y="299" width="1.6" height="1.6"/></g>
 <!-- row: curves -->
 <g fill="none" stroke="#333" stroke-width="1.2">
  <path d="M116.3 87 V99 C116.3 107 125.9 107 125.9 99 V96 C125.9 90 134.7 90 134.7 96 V105"/>
  <rect x="149.3" y="91.3" width="19.3" height="13.2"/>
  <path d="M183.8 105.6 L200 89.8"/>
  <path d="M216 89.4 C224 89 232 94 234.5 105.6"/>
  <circle cx="258.3" cy="98.3" r="10.1"/>
 </g>
 <path d="M282.8 97.3 H300 M291.6 88.6 V106.3" stroke="#333" stroke-width="1.3"/>
 <g fill="#e03a2a">
  <circle cx="116.4" cy="99" r="2.1"/><circle cx="125.9" cy="99" r="2.1"/><circle cx="134.7" cy="99" r="2.1"/>
  <circle cx="149.3" cy="91.5" r="2.1"/><circle cx="168.5" cy="104.5" r="2.1"/>
  <circle cx="183.7" cy="105.7" r="2.1"/><circle cx="200.1" cy="89.8" r="2.1"/>
  <circle cx="216" cy="89.4" r="2.1"/><circle cx="229.3" cy="93" r="2.1"/><circle cx="234.5" cy="105.6" r="2.1"/>
 </g>
 <!-- row: edit curves 1 -->
 <g fill="none" stroke-width="1.2">
  <path d="M114.4 143.6 H121.8" stroke="#333"/><path d="M121.8 143.6 H126.5 L135.3 153.5 V158" stroke="#e03030"/><path d="M135.3 158 V164.8" stroke="#333"/>
  <path d="M126.5 143.6 H135.3 V153.5" stroke="#888" stroke-width="0.8" stroke-dasharray="1 1"/>
  <path d="M149 144.3 H156.4" stroke="#333"/><path d="M156.4 144.3 C164 144.3 168.6 149 168.6 155.4" stroke="#e03030"/><path d="M168.6 155.4 V163.8" stroke="#333"/>
  <path d="M160 144.3 H168.6 V152" stroke="#888" stroke-width="0.8" stroke-dasharray="1 1"/>
  <path d="M183.6 143.2 L194.7 164.5" stroke="#333"/><path d="M181.4 157.5 H190.5" stroke="#222" stroke-width="1.1"/><path d="M192 157.5 H202" stroke="#222" stroke-width="1" stroke-dasharray="1 1"/>
  <path d="M216.8 143.2 L227.8 164.8" stroke="#333"/><path d="M214.1 157.5 H217.5" stroke="#222"/><path d="M217.5 157.5 H224.5" stroke="#e03030"/>
  <path d="M247 152.4 H260.7 M260.7 152.4 V164.8" stroke="#333"/><path d="M260.7 152.4 H269 M260.7 143.2 V152" stroke="#555" stroke-width="0.9" stroke-dasharray="1 1"/>
  <path d="M255 147.1 L265.7 157.4" stroke="#e03030" stroke-width="1.4"/>
  <path d="M280.1 157.1 H302.2" stroke="#333"/>
  <path d="M284.6 157 C284.6 151 287.5 147.2 292.4 147.2" stroke="#4a20a0"/>
  <path d="M285.4 158.4 C288 162 292 161.5 296 161.5 C299 161.5 300.5 163 301.4 165.3" stroke="#999" stroke-width="1"/>
  <path d="M280.1 161.5 L289.7 152.2" stroke="#d030d0" stroke-width="1.3" stroke-dasharray="1 0.6"/>
 </g>
 <path d="M195.5 151.8 L199.8 147.5 L202.3 150 L198 154.3 Z" fill="url(#gPen)"/>
 <path d="M192.8 154.5 L195.5 151.8 L198 154.3 L195.3 157 Z" fill="#d84040"/>
 <path d="M225.6 154.6 L232.6 146.6 L235.4 149.2 L228.2 157 Z" fill="url(#gPen)" stroke="#a08030" stroke-width="0.5"/>
 <path d="M232.6 146.6 L233.8 145.2 L236.6 147.8 L235.4 149.2 Z" fill="#e05050"/>
 <path d="M225.6 154.6 L224.6 157.4 L228.2 157 Z" fill="#444"/>
 <g fill="none" stroke="#e0b830" stroke-width="1.6"><ellipse cx="295.6" cy="146.9" rx="3" ry="4.5"/><ellipse cx="298.5" cy="152.5" rx="3" ry="4.5"/></g><g fill="none" stroke="#fff4c0" stroke-width="0.5"><ellipse cx="295.6" cy="146.9" rx="3" ry="4.5"/><ellipse cx="298.5" cy="152.5" rx="3" ry="4.5"/></g>
 <!-- row: edit curves 2 -->
 <g fill="none" stroke="#d02424" stroke-width="2.1">
  <path d="M114.6 197 C121 196 123.5 193 125 187 C126.5 180.5 130 176.8 135.3 176.8"/>
  <path d="M147.4 197.2 C154 197 156 193 158 187 C160 180 163 176.6 168.8 176.6"/>
  <path d="M180.4 197.2 C187 197 189 193 191 187 C193 180 196 176.6 201.8 176.6"/>
  <path d="M219 192.5 A8.5 8.5 0 1 1 231.9 184.7"/>
  <path d="M249.9 187.7 L257.3 180.6"/>
  <path d="M280.1 197.2 C287 197 289 193 291 187 C293 180 296 176.6 300.7 176.6"/>
 </g>
 <path d="M249.9 187.7 V197.2 M257.3 180.6 H268.6" stroke="#333" stroke-width="1.5" fill="none"/>
 <path d="M223.4 197.2 L229.3 189.1 L235.2 197.2 Z M255.5 197.2 L262 189.1 L268 197.2 Z" fill="none" stroke="#333" stroke-width="1.2"/>
 <path d="M290.4 186 L301.5 196.5 M301.5 186 L290.4 196.5" stroke="#555" stroke-width="2"/>
 <!-- move arrows -->
 <path d="M129.40 182.20 L132.60 185.40 L130.20 185.40 L130.20 189.60 L134.40 189.60 L134.40 187.20 L137.60 190.40 L134.40 193.60 L134.40 191.20 L130.20 191.20 L130.20 195.40 L132.60 195.40 L129.40 198.60 L126.20 195.40 L128.60 195.40 L128.60 191.20 L124.40 191.20 L124.40 193.60 L121.20 190.40 L124.40 187.20 L124.40 189.60 L128.60 189.60 L128.60 185.40 L126.20 185.40 Z" fill="#fff" stroke="#444" stroke-width="1" stroke-linejoin="miter"/>
 <!-- copy -->
 <path d="M161.8 184.2 C164 184.5 166 186 169.3 186.2 V194.6 H164.5" fill="#f6f6f6" stroke="#222" stroke-width="1.1"/>
 <path d="M157.4 186.6 C160 187 162.5 189 165.4 189.3 V197.7 C163 197.5 160 196.5 157.4 195.9 Z" fill="#ececec" stroke="#222" stroke-width="1.1"/>
 <path d="M161.8 184.2 V187.8" stroke="#222" stroke-width="1.1"/>
 <!-- move point -->
 <rect x="192.3" y="185.8" width="6.2" height="8.4" fill="#fff"/>
 <path d="M195.4 181.9 L199.8 186 H191 Z M195.4 198.5 L191 194.2 H199.8 Z M187.5 190.1 L192 185.8 V194.4 Z M203.8 190.1 L198.9 185.8 V194.4 Z" fill="#2a2a2a"/>
 <!-- more curves row 1 -->
 <path d="M116.6 243 L122.1 233.5 L122.1 240.5 L129.9 251.2 L136.2 240.5 L129.9 244.4 L122.1 240.5 Z" fill="none" stroke="#555" stroke-width="0.9"/>
 <g fill="#999"><circle cx="116.6" cy="243" r="2"/><circle cx="122.1" cy="233.5" r="2"/><circle cx="129.9" cy="251.2" r="2"/><circle cx="136.2" cy="240.5" r="2"/></g>
 <g fill="#e03a2a"><circle cx="122.1" cy="240.5" r="2.1"/><circle cx="129.9" cy="244.4" r="2.1"/></g>
 <path d="M148.3 242.7 L153.4 233.2 H164.8 L169.6 242.7 L164.8 252.2 H153.4 Z" fill="none" stroke="#333" stroke-width="1.2"/>
 <circle cx="158.9" cy="242.7" r="1.9" fill="#e03a2a"/>
 <ellipse cx="192.5" cy="242.7" rx="10.2" ry="7.3" fill="none" stroke="#333" stroke-width="1.2"/>
 <path d="M192.5 238.5 L193.4 241.8 L196.7 242.7 L193.4 243.6 L192.5 247 L191.6 243.6 L188.3 242.7 L191.6 241.8 Z" fill="#e03a2a"/>
 <path d="M218 234.1 C228 236 228 250 218 251.8" fill="none" stroke="#333" stroke-width="1.2"/>
 <g fill="#e03a2a"><circle cx="218" cy="234.1" r="2.1"/><circle cx="218" cy="251.8" r="2.1"/></g>
 <circle cx="233" cy="243" r="1.7" fill="#888"/>
 <path d="M248.6 240.3 L252.6 235.5 H261.6 V240 C264.5 240.8 267.3 243 267.3 246.7 C267.3 248.5 266.5 250 265.9 250 L262.6 252.4 H248.6 Z" fill="none" stroke="#333" stroke-width="1.2" stroke-linejoin="round"/>
 <path d="M251.4 241.2 L255.5 238.4 H258.5 V243.4 H261.6 C263.5 244 264.5 245 264.5 246.7 L261.9 249.3 H251.4 Z" fill="none" stroke="#d83030" stroke-width="1.1" stroke-linejoin="round"/>
 <path d="M280.1 253 C287 253 289 249 291 242 C293 235 296 232.4 300.7 232.4" fill="none" stroke="#d82828" stroke-width="1.8"/>
 <g fill="#fff" stroke="#333" stroke-width="1"><circle cx="291.9" cy="243.9" r="2.7"/><circle cx="299" cy="243.9" r="2.7"/><circle cx="291.9" cy="251.2" r="2.7"/><circle cx="299" cy="251.2" r="2.7"/></g>
 <!-- more curves row 2 -->
 <path d="M114.7 286 C120 285 122.5 283 123.5 278 C124.5 271 127 267.5 132.3 265.8" fill="none" stroke="#d80808" stroke-width="2"/>
 <path d="M123 275.5 L130.3 273 L130.6 272 L129.7 286.6 L129.6 283.6 H123 Z" fill="#fff" stroke="#111" stroke-width="1.3" stroke-linejoin="round"/>
 <path d="M129.8 276 L136.5 275.5 V283 L129.6 286.6 Z" fill="#fff" stroke="#111" stroke-width="1.3" stroke-linejoin="round"/>
 <defs><linearGradient id="gPl2" x1="0" y1="0" x2="1" y2="1"><stop offset="0" stop-color="#d8e8d8"/><stop offset="0.5" stop-color="#f0f6f0"/><stop offset="1" stop-color="#c8e4c8"/></linearGradient>
 <linearGradient id="gSh" x1="0" y1="0" x2="1" y2="1"><stop offset="0" stop-color="#a8c4ec"/><stop offset="0.5" stop-color="#e4eefa"/><stop offset="1" stop-color="#a8c4ec"/></linearGradient></defs>
 <path d="M150.3 265.7 L165.9 269.5 V286.2 L150.3 281.4 Z" fill="url(#gPl2)" stroke="#333" stroke-width="1.1"/>
 <path d="M148.3 285.8 C149.5 281 153 277 157.9 275.7" fill="none" stroke="#222" stroke-width="1.3"/>
 <path d="M157.9 275.7 L169.9 272.4" fill="none" stroke="#555" stroke-width="0.9"/>
 <circle cx="157.9" cy="275.7" r="2" fill="#d83030"/>
 <path d="M188.5 264.7 L197.6 267.1 V286.7 L188.5 284.3 Z" fill="#c8d8f0" fill-opacity="0.85" stroke="#6a80b8" stroke-width="0.9"/>
 <path d="M180.9 273.3 C185 271 190 269.5 197.2 270.9 L203.9 277.6 C199 278 194.5 280 192.8 283.8 Z" fill="url(#gSh)" fill-opacity="0.9" stroke="#6a80b8" stroke-width="0.9"/>
 <path d="M187.6 270.9 C192 271.5 195.5 274.5 197.6 278.6" fill="none" stroke="#e05020" stroke-width="1.6"/>
 <path d="M214.2 270 H223.6 M219 265 V274.5" stroke="#d82828" stroke-width="2"/>
 <path d="M219 273 C219 271.3 228.6 271.3 228.6 273 V285.5 C228.6 287 219 287 219 285.5 Z" fill="url(#gCylS)" stroke="#5a78d0" stroke-width="0.8"/>
 <path d="M228.6 279.7 H233" stroke="#f08030" stroke-width="1.2"/><path d="M232 277.7 L235 279.7 L232 281.7 Z" fill="#f08030"/>
 <path d="M234.5 272 C238 276 238 283 234.5 286.7" fill="none" stroke="#2020e0" stroke-width="1.1"/>
 <path d="M249.2 265.3 V286.7 M247 268.5 H268.3 M247 282.2 H268.3 M249.2 268.5 L268 286.7" stroke="#333" stroke-width="1.2" fill="none"/>
 <path d="M279.5 269.7 H289.5 M284.5 264.7 V274.7" stroke="#d82828" stroke-width="2"/>
 <circle cx="296.3" cy="272.4" r="5.2" fill="#fff" stroke="#333" stroke-width="1.1"/>
 <rect x="280.6" y="278.8" width="11" height="7.8" fill="#fff" stroke="#333" stroke-width="1.1"/>
 <!-- badge -->
 <circle cx="141.1" cy="261" r="9.9" fill="#ee20ee"/>
</svg>
<div class="t" style="left:137px;top:254px;font-size:13px;color:#fff;-webkit-text-stroke:0">1</div>
</body></html>
